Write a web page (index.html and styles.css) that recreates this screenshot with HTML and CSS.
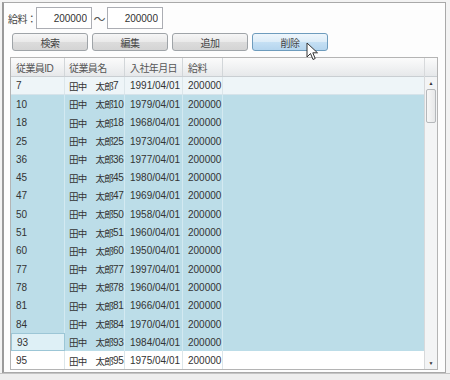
FILE: index.html
```html
<!DOCTYPE html>
<html lang="ja">
<head>
  <meta charset="UTF-8" />
  <title>従業員検索</title>
  <link rel="stylesheet" href="styles.css">
</head>
<body>
  <div class="window">
    <div class="filter">
      <span class="label">給料：</span>
      <input class="box" type="text" value="200000" />
      <span class="tilde">～</span>
      <input class="box" type="text" value="200000" />
    </div>
    <div class="buttons">
      <button class="btn">検索</button>
      <button class="btn">編集</button>
      <button class="btn">追加</button>
      <button class="btn hover">削除</button>
    </div>
    <div class="grid">
      <div class="table">
        <div class="row head">
          <div class="c id">従業員ID</div>
          <div class="c name">従業員名</div>
          <div class="c date">入社年月日</div>
          <div class="c pay">給料</div>
          <div class="c fill"></div>
        </div>
        <div class="rows" id="rows"></div>
      </div>
      <div class="scroll">
        <div class="corner"></div>
        <div class="track">
          <div class="arrow">▲</div>
          <div class="thumb"></div>
          <div class="space"></div>
          <div class="arrow">▼</div>
        </div>
      </div>
    </div>
  </div>
  <div class="under"></div>

  <svg class="cursor" width="14" height="20" viewBox="0 0 14 20">
    <path d="M1 1 L1 15 L4.5 11.5 L7 17.5 L9.2 16.5 L6.8 10.8 L11.5 10.8 Z" fill="#fff" stroke="#333" stroke-width="1" stroke-linejoin="round"/>
  </svg>

  <script>
    const data = [
      [7, 1991], [10, 1979], [18, 1968], [25, 1973], [36, 1977], [45, 1980],
      [47, 1969], [50, 1958], [51, 1960], [60, 1950], [77, 1997], [78, 1960],
      [81, 1966], [84, 1970], [93, 1984], [95, 1975]
    ];
    const rows = document.getElementById("rows");
    data.forEach(([id, year], i) => {
      const row = document.createElement("div");
      row.className = "row";
      if (i === 0) row.classList.add("first");
      else if (i < 15) row.classList.add("sel");
      row.innerHTML =
        `<div class="c id${id === 93 ? " cur" : ""}">${id}</div>` +
        `<div class="c name">田中　太郎<span class="num">${id}</span></div>` +
        `<div class="c date">${year}/04/01</div>` +
        `<div class="c pay">200000</div>` +
        `<div class="c fill"></div>`;
      rows.appendChild(row);
    });
  </script>
</body>
</html>
```

FILE: styles.css
```css
body {
  margin: 0;
  width: 450px;
  height: 380px;
  background: #f3f3f3;
  font-family: "Liberation Sans", "Noto Sans CJK JP", sans-serif;
  font-size: 10px;
  color: #333;
  overflow: hidden;
  position: relative;
}
.window {
  margin: 2px 0 0 2px;
  width: 441px;
  height: 369px;
  background: #fdfdfd;
  border: 1px solid #a9a9a9;
  border-left: 2px solid #9a9a9a;
  box-sizing: content-box;
}
.filter {
  display: flex;
  align-items: center;
  padding: 4px 0 0 4px;
  height: 22px;
}
.label {
  width: 28px;
  white-space: nowrap;
  letter-spacing: -0.6px;
  color: #444;
}
.box {
  width: 56px;
  height: 22px;
  box-sizing: border-box;
  border: 1px solid #abadb3;
  text-align: right;
  padding: 0 4px;
  font-family: inherit;
  font-size: 10px;
  color: #333;
  background: #fff;
}
.tilde {
  width: 15px;
  text-align: center;
  font-size: 12px;
  color: #555;
}
.buttons {
  display: flex;
  gap: 4px;
  padding: 4px 0 0 8px;
}
.btn {
  width: 76px;
  height: 18px;
  padding: 0;
  border: 1px solid #9fa4a8;
  border-radius: 3px;
  background: linear-gradient(#f6f6f6, #e9e9e9 50%, #dcdcdc 51%, #d4d4d4);
  font-family: inherit;
  font-size: 10px;
  letter-spacing: -0.5px;
  color: #444;
}
.btn.hover {
  border-color: #6e9cbd;
  background: linear-gradient(#eef6fc, #dcecf8 50%, #c5e0f4 51%, #b5d5ee);
}
.grid {
  display: flex;
  margin: 6px 0 0 6px;
  width: 428px;
  height: 313px;
  box-sizing: border-box;
  border: 1px solid #b4b4b4;
  background: #fff;
  overflow: hidden;
}
.table {
  flex: 1;
  overflow: hidden;
}
.row {
  display: flex;
  height: 18.3px;
  align-items: center;
}
.row.head {
  height: 18px;
  background: linear-gradient(#fbfbfb, #f1f2f3 50%, #e6e8ea);
  border-bottom: 1px solid #c9ced2;
}
.row.first {
  background: #eef5f8;
  border-bottom: 1px solid #d6e3ea;
  box-sizing: border-box;
}
.row.sel {
  background: #bcdde8;
}
.c {
  height: 100%;
  display: flex;
  align-items: center;
  padding-left: 5px;
  box-sizing: border-box;
  border-right: 1px solid #dce6ea;
  white-space: nowrap;
  overflow: hidden;
}
.head .c {
  border-right-color: #d2d6d9;
  letter-spacing: -0.6px;
  color: #555;
}
.sel .c {
  border-right-color: #d3e9f1;
}
.id { width: 54px; }
.name { width: 60px; padding-left: 4px; font-size: 9.5px; letter-spacing: -0.7px; }
.num { font-size: 10px; letter-spacing: -0.3px; }
.head .name { font-size: 10px; letter-spacing: -0.6px; }
.date { width: 58px; }
.pay { width: 40px; }
.fill { flex: 1; border-right: 0; }
.sel .c.cur {
  background: #def0f6;
  border: 1px solid #9cc6d6;
}
.scroll {
  width: 12px;
  display: flex;
  flex-direction: column;
  border-left: 1px solid #d7d9db;
}
.corner {
  height: 19px;
  background: linear-gradient(#fbfbfb, #e6e8ea);
  border-bottom: 1px solid #c9ced2;
  box-sizing: border-box;
}
.track {
  flex: 1;
  display: flex;
  flex-direction: column;
  background: #f3f4f5;
}
.arrow {
  height: 12px;
  font-size: 5px;
  text-align: center;
  line-height: 12px;
  color: #333;
}
.thumb {
  height: 32px;
  margin: 0 1px;
  border: 1px solid #b5b8bb;
  border-radius: 2px;
  background: linear-gradient(90deg, #f7f7f7, #e7e8e9);
}
.space {
  flex: 1;
}
.under {
  height: 6px;
  border-top: 1px solid #c4c4c4;
  background: #eeeeee;
}
.cursor {
  position: absolute;
  left: 306px;
  top: 42px;
}
```
